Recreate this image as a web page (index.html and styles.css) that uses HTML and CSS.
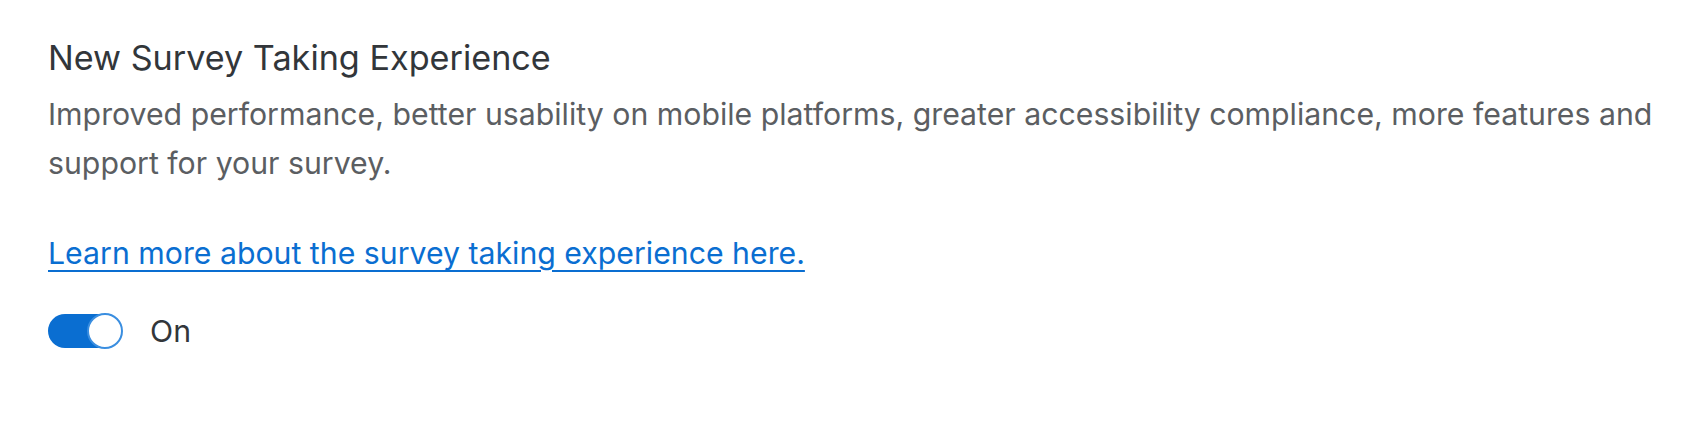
FILE: index.html
```html
<!DOCTYPE html>
<html lang="en">
<head>
    <meta charset="UTF-8">
    <meta name="viewport" content="width=device-width, initial-scale=1.0">
    <title>Survey Options</title>
    <link rel="stylesheet" href="styles.css">
</head>
<body>
    <div class="setting">
        <h2 class="setting-title">New Survey Taking Experience</h2>
        <p class="setting-desc">Improved performance, better usability on mobile platforms, greater accessibility compliance, more features and support for your survey.</p>
        <p class="setting-link"><a href="#">Learn more about the survey taking experience here.</a></p>
        <label class="switch-row">
            <span class="switch on"><span class="knob"></span></span>
            <span class="switch-label">On</span>
        </label>
    </div>
</body>
</html>
```
FILE: styles.css
```css
body {
    font-family: Inter, "Open Sans", sans-serif;
    background-color: #ffffff;
    margin: 0;
    padding: 0;
}

.setting {
    padding: 38px 0 0 48px;
    max-width: 1625px;
}

.setting-title {
    font-size: 34.2px;
    font-weight: 400;
    line-height: 40px;
    color: #32363a;
    margin: 0 0 12px;
}

.setting-desc {
    font-size: 30.25px;
    line-height: 49px;
    color: #5b5e62;
    margin: 0;
}

.setting-link {
    font-size: 30.25px;
    line-height: 46px;
    margin: 42px 0 0;
}

.setting-link a {
    color: #0a6ed1;
    text-decoration: underline;
    text-decoration-thickness: 2px;
    text-underline-offset: 6px;
}

.switch-row {
    display: flex;
    align-items: center;
    margin-top: 37px;
    cursor: pointer;
}

.switch {
    display: flex;
    justify-content: flex-end;
    width: 74px;
    height: 34px;
    border-radius: 17px;
    background-color: #0a6ed1;
    box-sizing: border-box;
}

.knob {
    width: 36px;
    height: 36px;
    margin: -1px -1px 0 0;
    border-radius: 50%;
    background: white;
    border: 2px solid #3a8ee0;
    box-sizing: border-box;
}

.switch-label {
    margin-left: 28px;
    font-size: 30.25px;
    color: #32363a;
}
```
